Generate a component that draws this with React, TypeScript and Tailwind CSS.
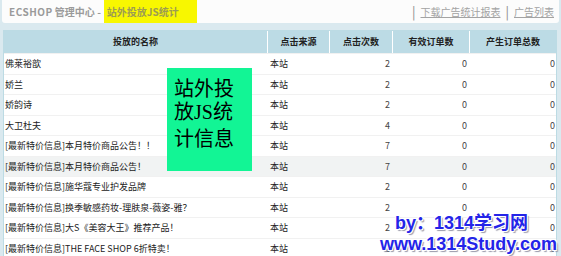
import React from "react";

const cjk = "'Noto Sans CJK SC', 'Liberation Sans', sans-serif";

interface AdRow {
  name: string;
  from: string;
  clicks: number;
  valid: number;
  total: number;
}

const rows: AdRow[] = [
  { name: "佛莱裕歆", from: "本站", clicks: 2, valid: 0, total: 0 },
  { name: "娇兰", from: "本站", clicks: 2, valid: 0, total: 0 },
  { name: "娇韵诗", from: "本站", clicks: 2, valid: 0, total: 0 },
  { name: "大卫杜夫", from: "本站", clicks: 4, valid: 0, total: 0 },
  { name: "[最新特价信息]本月特价商品公告！！", from: "本站", clicks: 7, valid: 0, total: 0 },
  { name: "[最新特价信息]本月特价商品公告！", from: "本站", clicks: 7, valid: 0, total: 0 },
  { name: "[最新特价信息]施华蔻专业护发品牌", from: "本站", clicks: 2, valid: 0, total: 0 },
  { name: "[最新特价信息]换季敏感药妆-理肤泉-薇姿-雅？", from: "本站", clicks: 2, valid: 0, total: 0 },
  { name: "[最新特价信息]大S《美容大王》推荐产品！", from: "本站", clicks: 2, valid: 0, total: 0 },
  { name: "[最新特价信息]THE FACE SHOP 6折特卖！", from: "本站", clicks: 2, valid: 0, total: 0 },
];

const cols = "grid grid-cols-[264px_62px_63px_77px_86px]";

export default function App() {
  return (
    <div
      className="relative w-[561px] h-[256px] overflow-hidden bg-[#dae9ef]"
      style={{ fontFamily: cjk }}
    >
      {/* title bar */}
      <div className="mx-[2px] h-[23px] flex items-center justify-between bg-[#fcfcfc] rounded-b-[3px] pr-[5px]">
        <div className="flex items-stretch h-full text-[10px] font-bold text-[#9a9a9a]">
          <span className="flex items-center pl-[7px] pr-[3px]">
            <span className="tracking-[0.5px]">ECSHOP</span>&nbsp;管理中心 -
          </span>
          <span className="flex items-center bg-[#f8f700] px-[3px] w-[93px] text-[#9c9c52]">
            站外投放JS统计
          </span>
        </div>
        <div className="flex items-center text-[10px] text-[#a3a3a3]">
          <span className="text-[13px] leading-none mr-[5px] text-[#8a8a8a]">|</span>
          <span className="underline">下载广告统计报表</span>
          <span className="text-[13px] leading-none mx-[5px] text-[#8a8a8a]">|</span>
          <span className="underline">广告列表</span>
        </div>
      </div>

      {/* list table */}
      <div className="mt-[7px] ml-[3px] w-[554px] border border-[#bcdbe4] bg-white">
        <div className={`${cols} h-[22px] bg-[#bcdbe5] text-[9px] font-bold text-[#222]`}>
          <div className="flex items-center justify-center border-r border-white">投放的名称</div>
          <div className="flex items-center justify-center border-r border-white">点击来源</div>
          <div className="flex items-center justify-center border-r border-white">点击次数</div>
          <div className="flex items-center justify-center border-r border-white">有效订单数</div>
          <div className="flex items-center justify-center">产生订单总数</div>
        </div>
        {rows.map((r, i) => (
          <div
            key={i}
            className={`${cols} h-[20.5px] text-[9px] text-[#222] border-t border-[#f1f1f1] ${
              i === 5 ? "bg-[#f1f3f3]" : "bg-white"
            }`}
          >
            <div className="flex items-center pl-[1px] whitespace-nowrap">{r.name}</div>
            <div className="flex items-center pl-[2px]">{r.from}</div>
            <div className="flex items-center justify-end pr-[3px] text-[#444]">{r.clicks}</div>
            <div className="flex items-center justify-end pr-[3px] text-[#444]">{r.valid}</div>
            <div className="flex items-center justify-end pr-[1px] text-[#444]">{r.total}</div>
          </div>
        ))}
      </div>

      {/* caption overlay */}
      <div className="absolute left-[167px] top-[68px] w-[85px] h-[103px] bg-[#12f595] pl-[7px] pt-[7px] text-[20px] leading-[25px] text-black">
        <div>站外投</div>
        <div style={{ fontFamily: "'Liberation Serif', 'Noto Sans CJK SC', serif" }}>放JS统</div>
        <div>计信息</div>
      </div>

      {/* watermark */}
      <div
        className="absolute right-[4px] top-[213px] flex flex-col items-end text-[18px] leading-[21px] font-bold text-[#2424e8]"
        style={{
          fontFamily: "'Liberation Sans', 'Noto Sans CJK SC', sans-serif",
          textShadow:
            "1px 1px 0 #fff, -1px -1px 0 #fff, 1px -1px 0 #fff, -1px 1px 0 #fff, 2px 2px 1px #99a",
        }}
      >
        <div className="mr-[29px]">by：1314学习网</div>
        <div>www.1314Study.com</div>
      </div>
    </div>
  );
}
